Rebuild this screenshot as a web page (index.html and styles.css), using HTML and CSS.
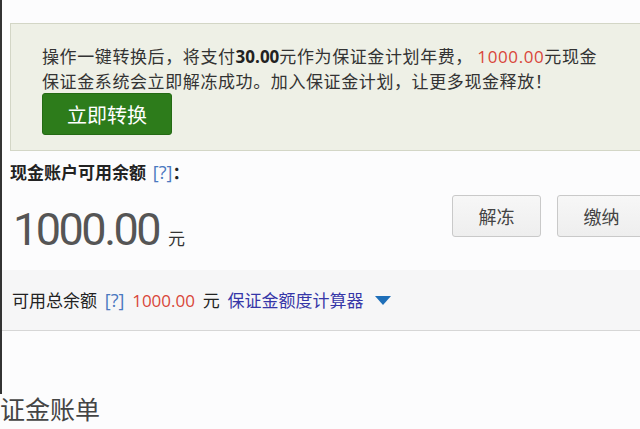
FILE: index.html
```html
<!DOCTYPE html>
<html lang="zh-CN">
<head>
    <meta charset="UTF-8">
    <meta name="viewport" content="width=device-width, initial-scale=1.0">
    <title>保证金账户</title>
    <link rel="stylesheet" href="styles.css">
</head>
<body>
    <div class="panel">
        <div class="notice">
            <p>操作一键转换后，将支付<b>30.00</b>元作为保证金计划年费， <span class="red">1000.00</span>元现金</p>
            <p>保证金系统会立即解冻成功。加入保证金计划，让更多现金释放！</p>
            <a href="#" class="convert">立即转换</a>
        </div>

        <div class="balance">
            <div class="balance-label">现金账户可用余额 <span class="help">[?]</span>：</div>
            <div class="balance-row">
                <div class="amount">1000.00<span class="unit">元</span></div>
                <div class="actions">
                    <a href="#" class="btn">解冻</a>
                    <a href="#" class="btn">缴纳</a>
                </div>
            </div>
        </div>

        <div class="total">
            可用总余额 <span class="help">[?]</span> <span class="red">1000.00</span> 元
            <a href="#" class="calc">保证金额度计算器</a>
            <span class="arrow"></span>
        </div>
    </div>

    <h2 class="bill-title">证金账单</h2>
</body>
</html>
```

FILE: styles.css
```css
*{
    margin: 0;
    padding: 0;
    box-sizing: border-box;
}

html, body{
    overflow: hidden;
}

body{
    background: #fcfcfd;
    font-family: "Noto Sans CJK SC", "Noto Sans", sans-serif;
    color: #333;
    width: 640px;
    height: 429px;
}

a{
    text-decoration: none;
}

.panel{
    width: 680px;
    border-left: 2px solid #333;
    padding: 23px 0 63px 8px;
}

.notice{
    background: #eef0e6;
    border: 1px solid #d3d6c6;
    padding: 20px 0 15px 31px;
}

.notice p{
    font-size: 17px;
    line-height: 24px;
    color: #333;
    letter-spacing: 0.6px;
}

.notice b{
    font-family: "Open Sans", "Noto Sans", sans-serif;
    font-weight: 700;
    color: #222;
    letter-spacing: 0;
}

.red{
    color: #d9463a;
    font-family: "Open Sans", "Noto Sans", sans-serif;
}

.convert{
    display: flex;
    align-items: center;
    justify-content: center;
    width: 130px;
    height: 42px;
    background: #2d7c1b;
    border: 1px solid #246a14;
    border-radius: 3px;
    color: #fff;
    font-size: 20px;
    letter-spacing: 0;
}

.balance{
    padding-top: 11px;
}

.balance-label{
    font-size: 17px;
    font-weight: 700;
    line-height: 20px;
    color: #222;
    word-spacing: 3px;
}

.help{
    color: #4a78c0;
    font-weight: 400;
    font-size: 18px;
    font-family: "Open Sans", "Noto Sans", sans-serif;
}

.balance-row{
    display: flex;
    justify-content: space-between;
    align-items: flex-start;
    padding: 13px 34px 0 3px;
}

.amount{
    font-family: Roboto, "Noto Sans", sans-serif;
    font-size: 45px;
    letter-spacing: -2.5px;
    line-height: 58px;
    margin-top: 6px;
    color: #555;
}

.unit{
    font-family: "Noto Sans CJK SC", sans-serif;
    font-size: 17px;
    letter-spacing: 0;
    margin-left: 9px;
    color: #333;
}

.actions{
    display: flex;
    gap: 16px;
}

.btn{
    display: flex;
    align-items: center;
    justify-content: center;
    width: 89px;
    height: 42px;
    background: linear-gradient(#f7f7f7, #eeeeee);
    border: 1px solid #c9c9c9;
    border-radius: 3px;
    font-size: 18px;
    color: #444;
}

.total{
    margin-top: 3px;
    margin-left: -8px;
    padding: 20px 0 19px 10px;
    background: #f6f6f7;
    border-bottom: 1px solid #d6d6d6;
    font-size: 17px;
    line-height: 20px;
    color: #222;
    word-spacing: 4px;
}

.calc{
    color: #3636a8;
}

.arrow{
    display: inline-block;
    width: 0;
    height: 0;
    border-left: 8px solid transparent;
    border-right: 8px solid transparent;
    border-top: 9px solid #1f6fb9;
    margin-left: 4px;
    vertical-align: 2px;
}

.bill-title{
    font-size: 25px;
    font-weight: 400;
    line-height: 28px;
    color: #444;
}
```
